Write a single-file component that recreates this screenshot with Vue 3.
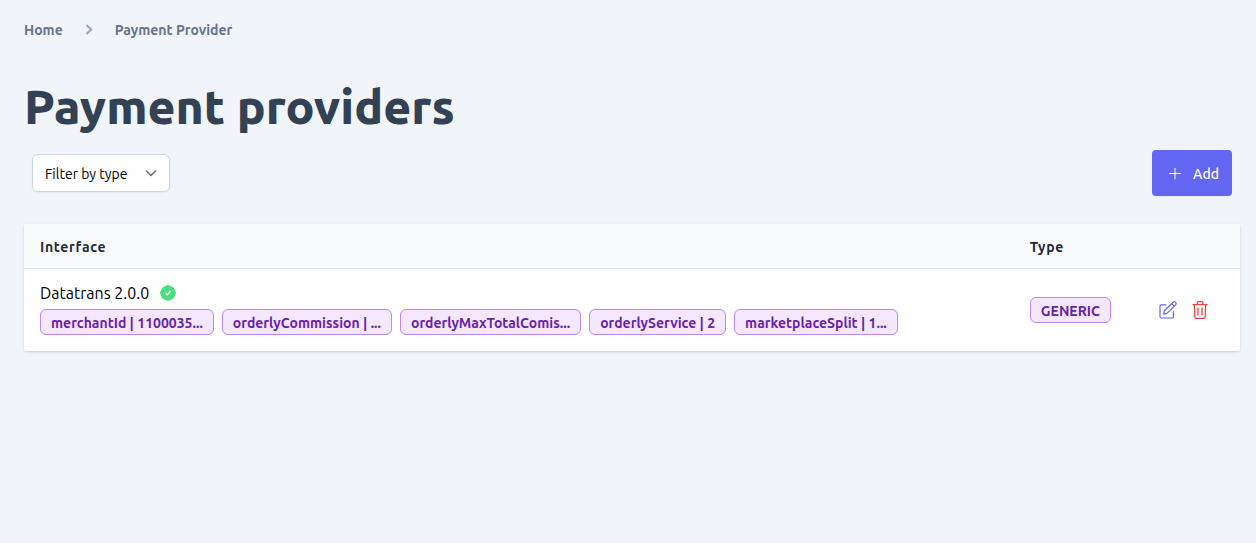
<script setup>
import { ref } from 'vue'

const filter = ref('')
const providers = [
  {
    name: 'Datatrans 2.0.0',
    type: 'GENERIC',
    settings: [
      'merchantId | 1100035...',
      'orderlyCommission | ...',
      'orderlyMaxTotalComis...',
      'orderlyService | 2',
      'marketplaceSplit | 1...'
    ]
  }
]
</script>

<template>
  <main class="page">
    <nav class="crumbs" aria-label="Breadcrumb">
      <a href="#">Home</a>
      <svg width="8" height="12" viewBox="0 0 8 12" fill="none" stroke="#94a3b8" stroke-width="1.9" aria-hidden="true"><path d="M1.500 1 6.200 5.500l-4.700 4.500" /></svg>
      <a href="#">Payment Provider</a>
    </nav>
    <h1>Payment providers</h1>
    <div class="toolbar">
      <div class="filter">
        <select v-model="filter" aria-label="Filter by type">
          <option value="">Filter by type</option>
        </select>
        <svg width="12" height="8" viewBox="0 0 12 8" fill="none" stroke="#6b7280" stroke-width="1.6" stroke-linecap="round" stroke-linejoin="round" aria-hidden="true"><path d="M1.500 2 6 6.500l4.500-4.500" /></svg>
      </div>
      <button type="button" class="add">
        <svg width="12" height="12" viewBox="0 0 12 12" stroke="#fff" stroke-width="1" stroke-linecap="round" aria-hidden="true"><path d="M.5 5.500h11M6 0v11" /></svg>
        Add
      </button>
    </div>
    <table>
      <thead>
        <tr>
          <th scope="col">Interface</th>
          <th scope="col" class="type">Type</th>
          <th class="actions"></th>
        </tr>
      </thead>
      <tbody>
        <tr v-for="p in providers" :key="p.name">
          <td>
            <div class="name">
              <span>{{ p.name }}</span>
              <svg width="16" height="16" viewBox="0 0 16 16" role="img" aria-label="Active">
                <path fill="#4ade80" stroke="#4ade80" stroke-width="2" stroke-linejoin="round" d="m8 1 2.200.9 2.700 1.200 1.200 2.700L15 8l-.9 2.200-1.200 2.700-2.700 1.200L8 15l-2.200-.9-2.700-1.200-1.200-2.700L1 8l.9-2.200 1.200-2.700 2.700-1.200z" />
                <path fill="none" stroke="#fff" stroke-width="1.500" d="m5.500 8.200 1.800 1.700 3.200-4.200" />
              </svg>
            </div>
            <div class="tags">
              <span v-for="s in p.settings" :key="s" class="tag">{{ s }}</span>
            </div>
          </td>
          <td class="type"><span class="tag">{{ p.type }}</span></td>
          <td class="actions">
            <div class="buttons">
              <button type="button" class="icon edit" aria-label="Edit">
                <svg width="18" height="18" viewBox="0 0 18 18" fill="none" stroke="currentColor" stroke-width="1.200" stroke-linecap="round" stroke-linejoin="round"><path d="M7 3.800H2.200C1.400 3.800 1 4.200 1 5v10.800c0 .8.400 1.200 1.200 1.200h11c.8 0 1.200-.4 1.200-1.200V10.500M5.300 9.800 14.100 1.300a1.700 1.700 0 0 1 2.500 2.500L7.900 12.400l-3.200.7zM12.700 2.700l2.500 2.500" /></svg>
              </button>
              <button type="button" class="icon delete" aria-label="Delete">
                <svg width="16" height="18" viewBox="0 0 16 18" fill="none" stroke="currentColor" stroke-width="1.300" stroke-linecap="round" stroke-linejoin="round"><path d="M1 3.700h14M2.300 3.700l.5 12c0 1 .6 1.600 1.500 1.600h7.400c.9 0 1.500-.6 1.500-1.600l.5-12M4.800 3.500l.6-1.800c.2-.6.6-1 1.200-1h2.800c.6 0 1 .4 1.200 1l.6 1.800M6 6.800v7.200M10 6.800v7.200" /></svg>
              </button>
            </div>
          </td>
        </tr>
      </tbody>
    </table>
  </main>
</template>

<style>
body {
  background: #f1f5f9;
}
</style>

<style scoped>
.page {
  padding: 20px 16px 24px 24px;
  font-family: Ubuntu, "Noto Sans", sans-serif;
  font-size: 14px;
  line-height: 20px;
  color: #0f172a;
}
.crumbs {
  display: flex;
  align-items: center;
  gap: 22px;
}
.crumbs a {
  color: #64748b;
  font-weight: 600;
  text-decoration: none;
}
h1 {
  margin: 42px 0 0;
  color: #334155;
  font-size: 48px;
  line-height: 48px;
  font-weight: 800;
}
.toolbar {
  display: flex;
  align-items: center;
  justify-content: space-between;
  margin: 20px 8px 28px;
}
.filter {
  display: grid;
  align-items: center;
}
.filter > * {
  grid-area: 1 / 1;
}
.filter svg {
  justify-self: end;
  margin-right: 13px;
  pointer-events: none;
}
select {
  appearance: none;
  height: 38px;
  padding: 2px 41px 0 12px;
  border: 1px solid #cbd5e1;
  border-radius: 6px;
  background: #fff;
  box-shadow: 0 1px 2px rgba(0, 0, 0, 0.05);
  color: #000;
  font: inherit;
}
button {
  border: 0;
  cursor: pointer;
}
.add {
  display: flex;
  align-items: center;
  gap: 12px;
  height: 46px;
  padding: 2px 13px 0 17px;
  border-radius: 4px;
  background: #6366f1;
  box-shadow: 0 1px 2px rgba(0, 0, 0, 0.05);
  color: #fff;
  font: inherit;
  font-weight: 500;
}
table {
  width: 100%;
  border-collapse: collapse;
  border-radius: 2px;
  background: #fff;
  box-shadow: 0 1px 3px rgba(0, 0, 0, 0.1), 0 1px 2px rgba(0, 0, 0, 0.06);
}
thead {
  background: #f8fafc;
}
th {
  padding: 13px 16px 11px;
  border-bottom: 1px solid #e2e8f0;
  text-align: left;
  font-weight: 600;
  letter-spacing: 0.05em;
  color: #1e293b;
}
td {
  padding: 12px 16px 16px;
}
td.type,
td.actions {
  padding-top: 14px;
  padding-bottom: 14px;
}
.type {
  width: 80px;
}
.actions {
  width: 81px;
}
.name {
  display: flex;
  align-items: center;
  gap: 11px;
  margin-bottom: 4px;
  color: #000;
  font-size: 16px;
  line-height: 24px;
}
.tags {
  display: flex;
  flex-wrap: wrap;
  gap: 8px;
}
.tag {
  display: inline-block;
  padding: 3px 10px 1px;
  border: 1px solid #c084fc;
  border-radius: 6px;
  background: #f3e8ff;
  color: #6b21a8;
  font-weight: 600;
}
.buttons {
  display: flex;
  justify-content: flex-end;
  gap: 15px;
  margin-right: 16px;
}
.icon {
  display: flex;
  padding: 0;
  background: none;
}
.edit {
  color: #6366f1;
}
.delete {
  color: #ef4444;
}
</style>
